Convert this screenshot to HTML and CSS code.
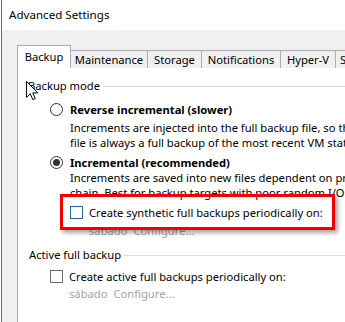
FILE: index.html
```html
<!DOCTYPE html>
<html>
<head>
<meta charset="utf-8">
<link rel="stylesheet" href="styles.css">
</head>
<body>
<div class="window">
  <div class="titlebar">Advanced Settings</div>
  <div class="client">
    <div class="tabs">
      <div class="tab active">Backup</div>
      <div class="tab">Maintenance</div>
      <div class="tab">Storage</div>
      <div class="tab">Notifications</div>
      <div class="tab">Hyper-V</div>
      <div class="tab">Scripts</div>
    </div>
    <div class="panel">
      <div class="group-head"><span class="group-label">Backup mode</span><span class="rule"></span></div>
      <div class="radio-row first"><span class="radio"></span><span class="opt-title">Reverse incremental (slower)</span></div>
      <div class="desc first-desc">Increments are injected into the full backup file, so that the latest backup<br>file is always a full backup of the most recent VM state.</div>
      <div class="radio-row second"><span class="radio checked"></span><span class="opt-title">Incremental (recommended)</span></div>
      <div class="desc">Increments are saved into new files dependent on previous files in the<br>chain. Best for backup targets with poor random I/O performance.</div>
      <div class="check-row synth"><span class="checkbox focus"></span><span>Create synthetic full backups periodically on:</span></div>
      <div class="sched synth-sched"><span>sábado</span><span>Configure...</span></div>
      <div class="group-head second-head"><span class="group-label">Active full backup</span><span class="rule"></span></div>
      <div class="check-row active-row"><span class="checkbox"></span><span>Create active full backups periodically on:</span></div>
      <div class="sched active-sched"><span>sábado</span><span>Configure...</span></div>

      <div class="highlight"></div>
      <svg class="cursor" width="13" height="20" viewBox="0 0 13 20">
        <path d="M0.5 0.5 L0.5 16.5 L4.3 12.8 L6.8 18.6 L9.2 17.6 L6.8 11.9 L11.8 11.9 Z" fill="#fff" stroke="#000" stroke-width="1" stroke-linejoin="miter"/>
      </svg>
    </div>
  </div>
</div>
</body>
</html>
```

FILE: styles.css
```css
html, body {
  margin: 0;
  padding: 0;
  background: #fff;
  width: 345px;
  height: 322px;
  overflow: hidden;
}

.window {
  margin-left: 1px;
  border-left: 1px solid #6e6e6e;
  height: 322px;
  background: #f0f0f0;
  font-family: "Segoe UI", "Noto Sans", "Open Sans", sans-serif;
  font-size: 11.2px;
  color: #000;
  overflow: hidden;
  padding-left: 1px;
}

.titlebar {
  height: 30px;
  line-height: 29px;
  font-size: 11.6px;
  background: #fff;
  padding-left: 7px;
  margin-left: -1px;
  white-space: nowrap;
}

.client {
  padding: 15px 0 0 14px;
}

.tabs {
  position: relative;
  z-index: 1;
  display: grid;
  grid-template-columns: 54px 77px 54px 79px 55px 60px;
  align-items: end;
  height: 23px;
  margin-bottom: -1px;
}

.tab {
  height: 18px;
  line-height: 17px;
  text-align: center;
  background: #f0f0f0;
  border-top: 1px solid #adadad;
  border-right: 1px solid #adadad;
  box-sizing: border-box;
  white-space: nowrap;
  overflow: hidden;
}

.tab:last-child {
  text-align: left;
  padding-left: 4px;
}

.tab.active {
  height: 23px;
  line-height: 22px;
  background: #fff;
  border-left: 1px solid #adadad;
}

.panel {
  position: relative;
  background: #fff;
  border: 1px solid #adadad;
  border-right: none;
  height: 300px;
  padding-left: 10px;
  overflow: hidden;
  white-space: nowrap;
}

.group-head {
  display: flex;
  align-items: center;
  height: 16px;
  line-height: 16px;
  margin-top: 10px;
}

.group-label {
  padding-right: 3px;
}

.rule {
  flex: 1;
  height: 1px;
  background: #dcdcdc;
}

.second-head {
  margin-top: 9px;
  padding-left: 1px;
}

.radio-row {
  display: flex;
  align-items: center;
  height: 15px;
  line-height: 15px;
  padding-left: 22px;
}

.radio-row.first { margin-top: 8px; }
.radio-row.second { margin-top: 5px; }

.radio {
  width: 13px;
  height: 13px;
  box-sizing: border-box;
  border: 1px solid #333;
  border-radius: 50%;
  margin-right: 7px;
  flex: none;
  display: flex;
  align-items: center;
  justify-content: center;
}

.radio.checked::after {
  content: "";
  width: 7px;
  height: 7px;
  border-radius: 50%;
  background: #333;
}

.opt-title {
  font-weight: bold;
}

.desc {
  line-height: 15px;
  padding-left: 42px;
}

.first-desc { margin-top: 3px; }

.check-row {
  display: flex;
  align-items: center;
  height: 15px;
  line-height: 15px;
}

.checkbox {
  width: 13px;
  height: 13px;
  box-sizing: border-box;
  border: 1px solid #6e6e6e;
  flex: none;
  margin-right: 6px;
}

.checkbox.focus {
  border-color: #1f6fb0;
}

.synth {
  margin-top: 5px;
  padding-left: 42px;
}

.sched {
  display: flex;
  gap: 6px;
  line-height: 15px;
  color: #a3a3a3;
}

.synth-sched {
  margin-top: 3px;
  padding-left: 61px;
}

.active-row {
  margin-top: 6px;
  padding-left: 22px;
}

.active-sched {
  margin-top: 2px;
  padding-left: 41px;
}

.highlight {
  position: absolute;
  left: 42px;
  top: 126px;
  width: 275px;
  height: 36px;
  box-sizing: border-box;
  border: 3px solid #ee0000;
  box-shadow: 3px 3px 4px rgba(0, 0, 0, 0.35);
}

.cursor {
  position: absolute;
  left: 8px;
  top: 13px;
}
```
